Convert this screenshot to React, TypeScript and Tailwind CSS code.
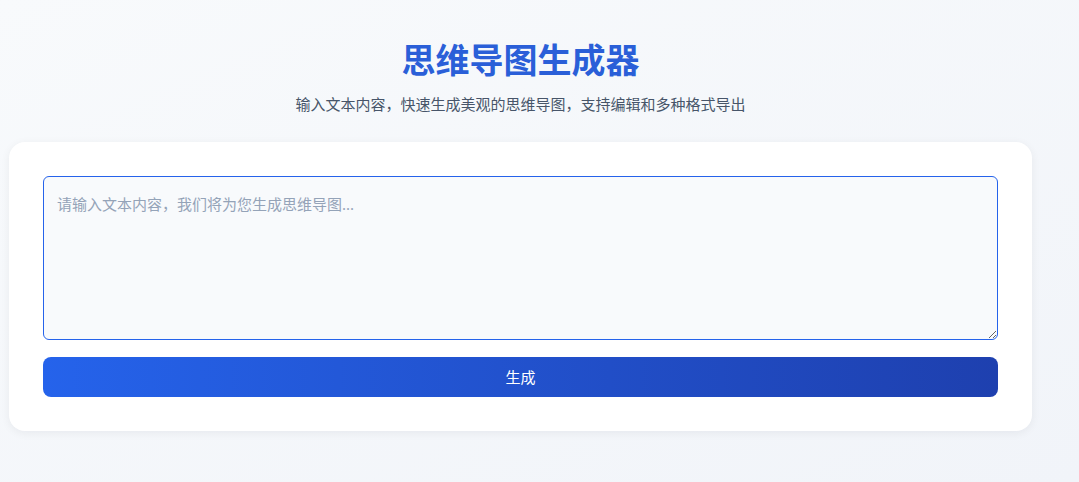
import { useState } from 'react';

const App = () => {
  const [text, setText] = useState('');

  return (
    <div
      className="min-h-[482px] w-full bg-gradient-to-br from-[#f8fafc] to-[#f1f4f9]"
      style={{ fontFamily: '"Noto Sans", "Noto Sans CJK SC", sans-serif' }}
    >
      <div className="w-[1041px] px-[9px] pt-[36px]">
        {/* Header */}
        <div className="flex flex-col items-center">
          <h1 className="text-[34px] leading-[48px] font-bold text-[#2a5fd8]">
            思维导图生成器
          </h1>
          <p className="mt-[9px] text-[15px] leading-[22px] text-[#475569]">
            输入文本内容，快速生成美观的思维导图，支持编辑和多种格式导出
          </p>
        </div>

        {/* Card */}
        <div className="mt-[27px] rounded-2xl bg-white px-[34px] pt-[34px] pb-[34px] shadow-[0_2px_10px_rgba(15,23,42,0.06)]">
          <textarea
            value={text}
            onChange={(e) => setText(e.target.value)}
            placeholder="请输入文本内容，我们将为您生成思维导图..."
            className="block h-[164px] w-full resize-y rounded-md border border-[#2563eb] bg-[#f8fafc] px-[13px] py-[16px] text-[15px] leading-[22px] text-[#334155] placeholder:text-[#94a3b8] outline-none"
          />
          <button className="mt-[17px] flex h-[40px] w-full items-center justify-center rounded-lg bg-gradient-to-r from-[#2563eb] to-[#1e40af] text-[15px] text-white">
            生成
          </button>
        </div>
      </div>
    </div>
  );
};

export default App;
